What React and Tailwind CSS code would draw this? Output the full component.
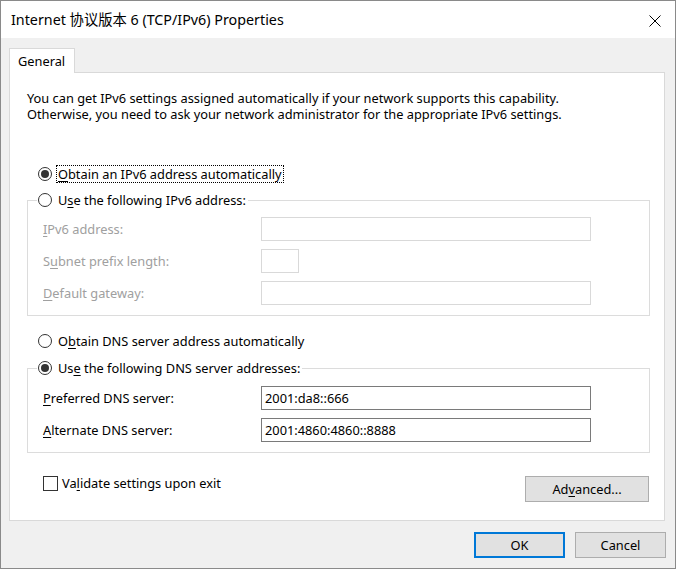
import React from 'react';

// IPv6 properties dialog
function Radio({ checked }) {
  return (
    <span className="w-[14px] h-[14px] shrink-0 rounded-full border border-[#333333] bg-white flex items-center justify-center">
      {checked && <span className="w-[8px] h-[8px] rounded-full bg-[#333333]" />}
    </span>
  );
}

function Field({ label, value, disabled, small }) {
  return (
    <div className="flex items-center h-[24px]">
      <span className={`w-[218px] ${disabled ? 'text-[#a0a0a0]' : 'text-black'}`}>{label}</span>
      <div
        className={`h-[24px] ${small ? 'w-[38px]' : 'w-[330px]'} border bg-white flex items-center pl-[3px] ${
          disabled ? 'border-[#d9d9d9]' : 'border-[#7a7a7a]'
        }`}
      >
        {value}
      </div>
    </div>
  );
}

function U({ children }) {
  return <span className="underline underline-offset-2 decoration-1">{children}</span>;
}

export default function App() {
  return (
    <div className="w-[676px] h-[569px] border border-[#8a8a8a] bg-[#f0f0f0] flex flex-col font-['Noto_Sans',sans-serif] text-[12.8px] leading-[16px] text-black">
      {/* Title bar */}
      <div className="h-[37px] shrink-0 bg-white flex items-center justify-between pl-[10px] pr-[14px]">
        <span className="text-[14.3px] font-['Noto_Sans','Noto_Sans_CJK_SC',sans-serif]">
          Internet 协议版本 6 (TCP/IPv6) Properties
        </span>
        <svg width="12" height="12" viewBox="0 0 12 12" className="mt-[2px]">
          <path d="M0.5 0.5 L11.5 11.5 M11.5 0.5 L0.5 11.5" stroke="#000" strokeWidth="1" fill="none" />
        </svg>
      </div>

      {/* Body */}
      <div className="flex-1 flex flex-col pl-[8px] pt-[10px]">
        <div className="relative z-10 w-[66px] h-[25px] border border-b-0 border-[#d9d9d9] bg-white pl-[8px] flex items-center -mb-px">
          General
        </div>
        <div className="w-[656px] h-[449px] border border-[#d9d9d9] bg-white pl-[17px] pt-[17px] flex flex-col">
          <p>
            You can get IPv6 settings assigned automatically if your network supports this capability.
            <br />
            Otherwise, you need to ask your network administrator for the appropriate IPv6 settings.
          </p>

          <div className="mt-[44px] h-[16px] pl-[11px] flex items-center">
            <Radio checked />
            <span className="ml-[5px] px-px outline-1 outline-dotted outline-black">
              <U>O</U>btain an IPv6 address automatically
            </span>
          </div>

          <fieldset className="mt-[10px] w-[623px] border border-[#dcdcdc] pl-[15px] pt-[9px] pb-[10px] flex flex-col gap-[8px]">
            <legend className="-ml-[6px] pl-px pr-[2px] h-[16px] flex items-center">
              <Radio />
              <span className="ml-[6px]">
                U<U>s</U>e the following IPv6 address:
              </span>
            </legend>
            <Field disabled label={<><U>I</U>Pv6 address:</>} />
            <Field disabled small label={<>S<U>u</U>bnet prefix length:</>} />
            <Field disabled label={<><U>D</U>efault gateway:</>} />
          </fieldset>

          <div className="mt-[17px] h-[16px] pl-[11px] flex items-center">
            <Radio />
            <span className="ml-[6px]">
              O<U>b</U>tain DNS server address automatically
            </span>
          </div>

          <fieldset className="mt-[11px] w-[623px] border border-[#dcdcdc] pl-[15px] pt-[10px] pb-[10px] flex flex-col gap-[8px]">
            <legend className="-ml-[6px] pl-px pr-[2px] h-[16px] flex items-center">
              <Radio checked />
              <span className="ml-[6px]">
                Us<U>e</U> the following DNS server addresses:
              </span>
            </legend>
            <Field label={<><U>P</U>referred DNS server:</>} value="2001:da8::666" />
            <Field label={<><U>A</U>lternate DNS server:</>} value="2001:4860:4860::8888" />
          </fieldset>

          <div className="mt-[22px] w-[622px] flex items-start justify-between">
            <div className="h-[16px] pl-[16px] flex items-center">
              <span className="w-[15px] h-[15px] border border-[#333333] bg-white" />
              <span className="ml-[4px]">
                Va<U>l</U>idate settings upon exit
              </span>
            </div>
            <button className="mt-[1px] w-[124px] h-[26px] border border-[#adadad] bg-[#e1e1e1] flex items-center justify-center">
              Ad<U>v</U>anced...
            </button>
          </div>
        </div>

        <div className="mt-[11px] w-[657px] flex justify-end gap-[10px]">
          <button className="w-[91px] h-[26px] border-2 border-[#0078d7] bg-[#e1e1e1] flex items-center justify-center">
            OK
          </button>
          <button className="w-[91px] h-[26px] border border-[#adadad] bg-[#e1e1e1] flex items-center justify-center">
            Cancel
          </button>
        </div>
      </div>
    </div>
  );
}
